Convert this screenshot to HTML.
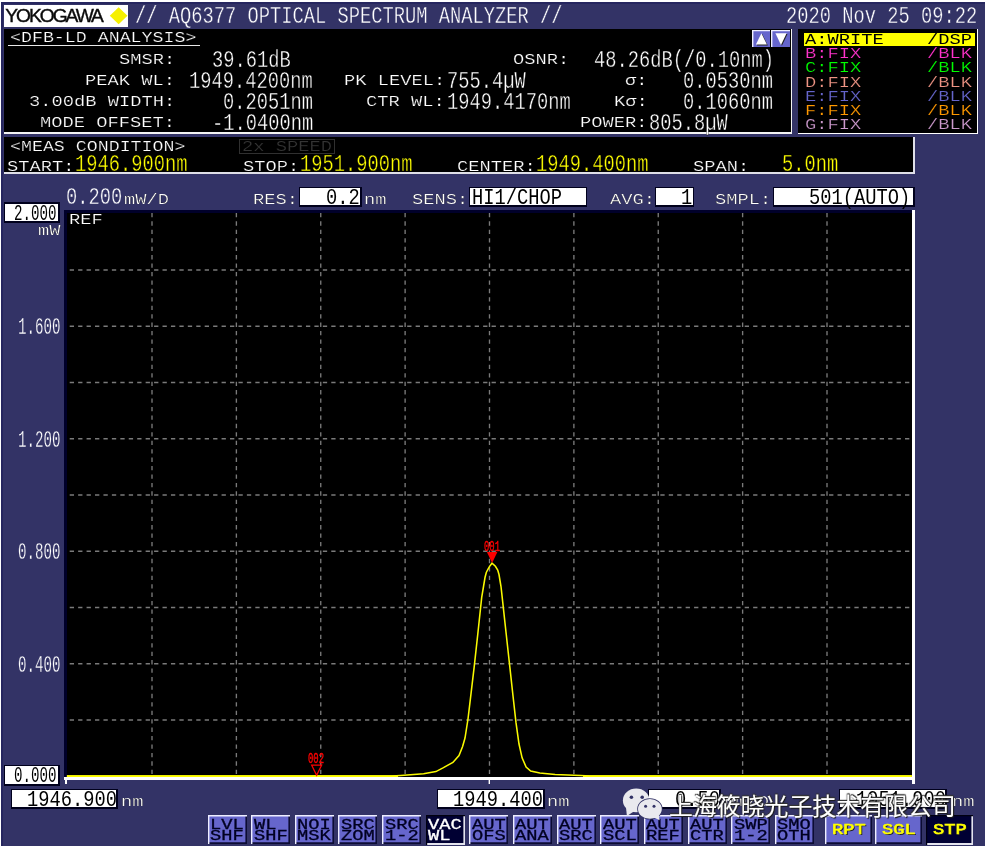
<!DOCTYPE html>
<html><head><meta charset="utf-8"><title>AQ6377 OPTICAL SPECTRUM ANALYZER</title>
<style>
html,body{margin:0;padding:0;background:#fff;}
body{width:988px;height:850px;position:relative;overflow:hidden;}
#scr{position:absolute;left:0;top:0;width:988px;height:850px;will-change:transform;}
.r{position:absolute;}
.t{position:absolute;white-space:pre;font-family:"Liberation Mono",monospace;transform-origin:0 0;}
.logo{position:absolute;font-family:"Liberation Sans",sans-serif;font-size:19.2px;line-height:22.3px;letter-spacing:-2.0px;color:#0a0a0a;-webkit-text-stroke:0.4px #0a0a0a;white-space:pre;}
.wm{position:absolute;font-family:"Liberation Sans","Noto Sans CJK SC",sans-serif;font-size:23.9px;line-height:32px;color:#fff;white-space:pre;font-weight:400;-webkit-text-stroke:0.1px #fff;text-shadow:1px 1px 1px #1a1a1a,-0.6px -0.6px 1px #333,0.8px -0.6px 1px #333;}
</style></head><body><div id="scr">
<div class="r" style="left:1.00px;top:1.80px;width:984.00px;height:844.20px;background:#333366;"></div>
<div class="r" style="left:1.00px;top:1.80px;width:984.00px;height:2.40px;background:#26265f;"></div>
<div class="r" style="left:1.00px;top:1.80px;width:1.60px;height:844.20px;background:#26265f;"></div>
<div class="r" style="left:3.70px;top:4.70px;width:124.80px;height:22.30px;background:#fff;"></div>
<div class="logo" style="left:5.2px;top:4.9px;">YOKOGAWA</div>
<svg class="r" style="left:108px;top:5px" width="21" height="21" viewBox="0 0 21 21"><polygon points="10.65,2.2 19.5,10.7 10.65,19.2 1.8,10.7" fill="#f6f000"/></svg>
<div class="t" style="left:134.70px;top:6.00px;font-size:23.1px;line-height:23.1px;transform:scaleX(0.8116);color:#fff;-webkit-text-stroke:0.38px #333366;">// AQ6377 OPTICAL SPECTRUM ANALYZER //</div>
<div class="t" style="left:786.00px;top:6.00px;font-size:23.1px;line-height:23.1px;transform:scaleX(0.8116);color:#fff;-webkit-text-stroke:0.38px #333366;">2020 Nov 25 09:22</div>
<div class="r" style="left:3.80px;top:28.70px;width:788.65px;height:105.20px;background:#f4f4f4;"></div>
<div class="r" style="left:3.80px;top:28.70px;width:787.30px;height:103.60px;background:#000;"></div>
<div class="t" style="left:9.80px;top:31.00px;font-size:14.4px;line-height:14.4px;transform:scaleX(1.2695);color:#fff;-webkit-text-stroke:0.22px #000;">&lt;DFB-LD ANALYSIS&gt;</div>
<div class="r" style="left:8.00px;top:44.50px;width:192.00px;height:1.20px;background:#e8e8e8;"></div>
<div class="t" style="left:118.95px;top:53.00px;font-size:14.4px;line-height:14.4px;transform:scaleX(1.3019);color:#fff;-webkit-text-stroke:0.22px #000;">SMSR:</div>
<div class="t" style="left:85.20px;top:74.00px;font-size:14.4px;line-height:14.4px;transform:scaleX(1.3019);color:#fff;-webkit-text-stroke:0.22px #000;">PEAK WL:</div>
<div class="t" style="left:28.95px;top:95.00px;font-size:14.4px;line-height:14.4px;transform:scaleX(1.3019);color:#fff;-webkit-text-stroke:0.22px #000;">3.00dB WIDTH:</div>
<div class="t" style="left:40.20px;top:116.00px;font-size:14.4px;line-height:14.4px;transform:scaleX(1.3019);color:#fff;-webkit-text-stroke:0.22px #000;">MODE OFFSET:</div>
<div class="t" style="left:211.70px;top:50.00px;font-size:23.1px;line-height:23.1px;transform:scaleX(0.8116);color:#fff;-webkit-text-stroke:0.38px #000;">39.61dB</div>
<div class="t" style="left:189.20px;top:71.00px;font-size:23.1px;line-height:23.1px;transform:scaleX(0.8116);color:#fff;-webkit-text-stroke:0.38px #000;">1949.4200nm</div>
<div class="t" style="left:222.95px;top:92.00px;font-size:23.1px;line-height:23.1px;transform:scaleX(0.8116);color:#fff;-webkit-text-stroke:0.38px #000;">0.2051nm</div>
<div class="t" style="left:211.70px;top:113.00px;font-size:23.1px;line-height:23.1px;transform:scaleX(0.8116);color:#fff;-webkit-text-stroke:0.38px #000;">-1.0400nm</div>
<div class="t" style="left:343.85px;top:74.00px;font-size:14.4px;line-height:14.4px;transform:scaleX(1.3019);color:#fff;-webkit-text-stroke:0.22px #000;">PK LEVEL:</div>
<div class="t" style="left:366.35px;top:95.00px;font-size:14.4px;line-height:14.4px;transform:scaleX(1.3019);color:#fff;-webkit-text-stroke:0.22px #000;">CTR WL:</div>
<div class="t" style="left:446.60px;top:71.00px;font-size:23.1px;line-height:23.1px;transform:scaleX(0.8116);color:#fff;-webkit-text-stroke:0.38px #000;">755.4µW</div>
<div class="t" style="left:446.60px;top:92.00px;font-size:23.1px;line-height:23.1px;transform:scaleX(0.8116);color:#fff;-webkit-text-stroke:0.38px #000;">1949.4170nm</div>
<div class="t" style="left:512.75px;top:53.00px;font-size:14.4px;line-height:14.4px;transform:scaleX(1.3019);color:#fff;-webkit-text-stroke:0.22px #000;">OSNR:</div>
<div class="t" style="left:624.90px;top:74.00px;font-size:14.4px;line-height:14.4px;transform:scaleX(1.3019);color:#fff;-webkit-text-stroke:0.22px #000;">σ:</div>
<div class="t" style="left:613.65px;top:95.00px;font-size:14.4px;line-height:14.4px;transform:scaleX(1.3019);color:#fff;-webkit-text-stroke:0.22px #000;">Kσ:</div>
<div class="t" style="left:579.90px;top:116.00px;font-size:14.4px;line-height:14.4px;transform:scaleX(1.3019);color:#fff;-webkit-text-stroke:0.22px #000;">POWER:</div>
<div class="t" style="left:593.80px;top:50.00px;font-size:23.1px;line-height:23.1px;transform:scaleX(0.8116);color:#fff;-webkit-text-stroke:0.38px #000;">48.26dB(/0.10nm)</div>
<div class="t" style="left:682.50px;top:71.00px;font-size:23.1px;line-height:23.1px;transform:scaleX(0.8116);color:#fff;-webkit-text-stroke:0.38px #000;">0.0530nm</div>
<div class="t" style="left:682.50px;top:92.00px;font-size:23.1px;line-height:23.1px;transform:scaleX(0.8116);color:#fff;-webkit-text-stroke:0.38px #000;">0.1060nm</div>
<div class="t" style="left:649.00px;top:113.00px;font-size:23.1px;line-height:23.1px;transform:scaleX(0.8116);color:#fff;-webkit-text-stroke:0.38px #000;">805.8µW</div>
<div class="r" style="left:751.70px;top:30.20px;width:18.30px;height:16.80px;background:#6666cc;box-shadow:inset 1.4px 1.3px 0 #f0f0ff;"></div>
<svg class="r" style="left:0;top:0" width="988" height="60"><polygon points="761.4,33.2 766.9,44.6 755.9,44.6" fill="#222" transform="translate(0.9,0.9)"/><polygon points="761.4,33.2 766.9,44.6 755.9,44.6" fill="#fff"/></svg>
<div class="r" style="left:771.20px;top:30.20px;width:18.60px;height:16.80px;background:#6666cc;box-shadow:inset 1.4px 1.3px 0 #f0f0ff;"></div>
<svg class="r" style="left:0;top:0" width="988" height="60"><polygon points="781.0,44.9 786.6,33.2 775.4,33.2" fill="#222" transform="translate(0.9,0.9)"/><polygon points="781.0,44.9 786.6,33.2 775.4,33.2" fill="#fff"/></svg>
<div class="r" style="left:797.90px;top:28.70px;width:180.40px;height:105.50px;background:#fff;"></div>
<div class="r" style="left:797.90px;top:28.70px;width:179.00px;height:104.10px;background:#000;"></div>
<div class="r" style="left:803.50px;top:33.00px;width:171.30px;height:12.60px;background:#ffff00;"></div>
<div class="t" style="left:804.60px;top:33.00px;font-size:14.4px;line-height:14.4px;transform:scaleX(1.3019);color:#000;">A:WRITE</div>
<div class="t" style="left:927.00px;top:33.00px;font-size:14.4px;line-height:14.4px;transform:scaleX(1.3019);color:#000;">/DSP</div>
<div class="t" style="left:804.60px;top:47.00px;font-size:14.4px;line-height:14.4px;transform:scaleX(1.3019);color:#ff33cc;-webkit-text-stroke:0.22px #000;">B:FIX</div>
<div class="t" style="left:927.00px;top:47.00px;font-size:14.4px;line-height:14.4px;transform:scaleX(1.3019);color:#ff33cc;-webkit-text-stroke:0.22px #000;">/BLK</div>
<div class="t" style="left:804.60px;top:61.00px;font-size:14.4px;line-height:14.4px;transform:scaleX(1.3019);color:#00ff00;-webkit-text-stroke:0.22px #000;">C:FIX</div>
<div class="t" style="left:927.00px;top:61.00px;font-size:14.4px;line-height:14.4px;transform:scaleX(1.3019);color:#00ff00;-webkit-text-stroke:0.22px #000;">/BLK</div>
<div class="t" style="left:804.60px;top:76.00px;font-size:14.4px;line-height:14.4px;transform:scaleX(1.3019);color:#ee9484;-webkit-text-stroke:0.22px #000;">D:FIX</div>
<div class="t" style="left:927.00px;top:76.00px;font-size:14.4px;line-height:14.4px;transform:scaleX(1.3019);color:#ee9484;-webkit-text-stroke:0.22px #000;">/BLK</div>
<div class="t" style="left:804.60px;top:90.00px;font-size:14.4px;line-height:14.4px;transform:scaleX(1.3019);color:#6666cc;-webkit-text-stroke:0.22px #000;">E:FIX</div>
<div class="t" style="left:927.00px;top:90.00px;font-size:14.4px;line-height:14.4px;transform:scaleX(1.3019);color:#6666cc;-webkit-text-stroke:0.22px #000;">/BLK</div>
<div class="t" style="left:804.60px;top:104.00px;font-size:14.4px;line-height:14.4px;transform:scaleX(1.3019);color:#ff9900;-webkit-text-stroke:0.22px #000;">F:FIX</div>
<div class="t" style="left:927.00px;top:104.00px;font-size:14.4px;line-height:14.4px;transform:scaleX(1.3019);color:#ff9900;-webkit-text-stroke:0.22px #000;">/BLK</div>
<div class="t" style="left:804.60px;top:118.00px;font-size:14.4px;line-height:14.4px;transform:scaleX(1.3019);color:#cc99cc;-webkit-text-stroke:0.22px #000;">G:FIX</div>
<div class="t" style="left:927.00px;top:118.00px;font-size:14.4px;line-height:14.4px;transform:scaleX(1.3019);color:#cc99cc;-webkit-text-stroke:0.22px #000;">/BLK</div>
<div class="r" style="left:3.80px;top:137.00px;width:910.80px;height:36.90px;background:#e0e0e8;"></div>
<div class="r" style="left:3.80px;top:137.00px;width:909.40px;height:35.30px;background:#000;"></div>
<div class="t" style="left:9.80px;top:140.00px;font-size:14.4px;line-height:14.4px;transform:scaleX(1.2695);color:#fff;-webkit-text-stroke:0.22px #000;">&lt;MEAS CONDITION&gt;</div>
<div class="r" style="left:238.60px;top:139.00px;width:96.60px;height:15.00px;background:#000;border:1px solid #303030;box-sizing:border-box;"></div>
<div class="t" style="left:242.30px;top:140.00px;font-size:14.4px;line-height:14.4px;transform:scaleX(1.3019);color:#343434;-webkit-text-stroke:0.22px #000;">2x SPEED</div>
<div class="t" style="left:6.50px;top:160.00px;font-size:14.4px;line-height:14.4px;transform:scaleX(1.3019);color:#fff;-webkit-text-stroke:0.22px #000;">START:</div>
<div class="t" style="left:74.50px;top:154.00px;font-size:23.1px;line-height:23.1px;transform:scaleX(0.8116);color:#ffff00;-webkit-text-stroke:0.38px #000;">1946.900nm</div>
<div class="t" style="left:242.75px;top:160.00px;font-size:14.4px;line-height:14.4px;transform:scaleX(1.3019);color:#fff;-webkit-text-stroke:0.22px #000;">STOP:</div>
<div class="t" style="left:299.50px;top:154.00px;font-size:23.1px;line-height:23.1px;transform:scaleX(0.8116);color:#ffff00;-webkit-text-stroke:0.38px #000;">1951.900nm</div>
<div class="t" style="left:456.50px;top:160.00px;font-size:14.4px;line-height:14.4px;transform:scaleX(1.3019);color:#fff;-webkit-text-stroke:0.22px #000;">CENTER:</div>
<div class="t" style="left:535.70px;top:154.00px;font-size:23.1px;line-height:23.1px;transform:scaleX(0.8116);color:#ffff00;-webkit-text-stroke:0.38px #000;">1949.400nm</div>
<div class="t" style="left:692.75px;top:160.00px;font-size:14.4px;line-height:14.4px;transform:scaleX(1.3019);color:#fff;-webkit-text-stroke:0.22px #000;">SPAN:</div>
<div class="t" style="left:782.20px;top:154.00px;font-size:23.1px;line-height:23.1px;transform:scaleX(0.8116);color:#ffff00;-webkit-text-stroke:0.38px #000;">5.0nm</div>
<div class="t" style="left:66.00px;top:187.00px;font-size:23.1px;line-height:23.1px;transform:scaleX(0.8116);color:#fff;-webkit-text-stroke:0.38px #333366;">0.200</div>
<div class="t" style="left:123.80px;top:193.00px;font-size:14.4px;line-height:14.4px;transform:scaleX(1.3019);color:#fff;-webkit-text-stroke:0.22px #000;">mW/D</div>
<div class="t" style="left:252.60px;top:193.00px;font-size:14.4px;line-height:14.4px;transform:scaleX(1.3019);color:#fff;-webkit-text-stroke:0.22px #000;">RES:</div>
<div class="r" style="left:298.90px;top:186.50px;width:62.90px;height:20.80px;background:#00001c;"></div>
<div class="r" style="left:300.10px;top:187.70px;width:59.90px;height:17.80px;background:#fff;"></div>
<div class="t" style="left:325.65px;top:187.00px;font-size:22.8px;line-height:22.8px;transform:scaleX(0.8222);color:#000;">0.2</div>
<div class="t" style="left:364.30px;top:193.00px;font-size:14.4px;line-height:14.4px;transform:scaleX(1.3019);color:#fff;-webkit-text-stroke:0.22px #000;">nm</div>
<div class="t" style="left:411.50px;top:193.00px;font-size:14.4px;line-height:14.4px;transform:scaleX(1.3019);color:#fff;-webkit-text-stroke:0.22px #000;">SENS:</div>
<div class="r" style="left:469.20px;top:186.50px;width:118.30px;height:20.80px;background:#00001c;"></div>
<div class="r" style="left:470.40px;top:187.70px;width:115.30px;height:17.80px;background:#fff;"></div>
<div class="t" style="left:471.90px;top:187.00px;font-size:22.8px;line-height:22.8px;transform:scaleX(0.8222);color:#000;">HI1/CHOP</div>
<div class="t" style="left:609.70px;top:193.00px;font-size:14.4px;line-height:14.4px;transform:scaleX(1.3019);color:#fff;-webkit-text-stroke:0.22px #000;">AVG:</div>
<div class="r" style="left:655.00px;top:186.50px;width:39.40px;height:20.80px;background:#00001c;"></div>
<div class="r" style="left:656.20px;top:187.70px;width:36.40px;height:17.80px;background:#fff;"></div>
<div class="t" style="left:680.75px;top:187.00px;font-size:22.8px;line-height:22.8px;transform:scaleX(0.8222);color:#000;">1</div>
<div class="t" style="left:715.25px;top:193.00px;font-size:14.4px;line-height:14.4px;transform:scaleX(1.3019);color:#fff;-webkit-text-stroke:0.22px #000;">SMPL:</div>
<div class="r" style="left:772.50px;top:186.50px;width:142.00px;height:20.80px;background:#00001c;"></div>
<div class="r" style="left:773.70px;top:187.70px;width:139.00px;height:17.80px;background:#fff;"></div>
<div class="t" style="left:809.05px;top:187.00px;font-size:22.8px;line-height:22.8px;transform:scaleX(0.8222);color:#000;">501(AUTO)</div>
<div class="r" style="left:64.20px;top:210.00px;width:850.60px;height:570.00px;background:#fff;"></div>
<div class="r" style="left:64.20px;top:210.00px;width:847.60px;height:567.00px;background:#00002a;"></div>
<div class="r" style="left:66.90px;top:212.80px;width:844.90px;height:564.20px;background:#000;"></div>
<svg class="r" style="left:0;top:0" width="988" height="850" viewBox="0 0 988 850"><g stroke="#7a7a7a" stroke-width="1.35" fill="none" stroke-dasharray="4.3 4.1375"><line x1="69.7" y1="270.00" x2="911.8" y2="270.00"/><line x1="69.7" y1="326.25" x2="911.8" y2="326.25"/><line x1="69.7" y1="382.50" x2="911.8" y2="382.50"/><line x1="69.7" y1="438.75" x2="911.8" y2="438.75"/><line x1="69.7" y1="495.00" x2="911.8" y2="495.00"/><line x1="69.7" y1="551.25" x2="911.8" y2="551.25"/><line x1="69.7" y1="607.50" x2="911.8" y2="607.50"/><line x1="69.7" y1="663.75" x2="911.8" y2="663.75"/><line x1="69.7" y1="720.00" x2="911.8" y2="720.00"/><line x1="152.00" y1="212.9" x2="152.00" y2="776.25"/><line x1="236.38" y1="212.9" x2="236.38" y2="776.25"/><line x1="320.75" y1="212.9" x2="320.75" y2="776.25"/><line x1="405.12" y1="212.9" x2="405.12" y2="776.25"/><line x1="489.50" y1="212.9" x2="489.50" y2="776.25"/><line x1="573.88" y1="212.9" x2="573.88" y2="776.25"/><line x1="658.25" y1="212.9" x2="658.25" y2="776.25"/><line x1="742.62" y1="212.9" x2="742.62" y2="776.25"/><line x1="827.00" y1="212.9" x2="827.00" y2="776.25"/></g><polyline fill="none" stroke="#fafa00" stroke-width="1.55" stroke-linejoin="miter" points="66.9,776.0 392.0,776.0 400.7,775.5 423.6,773.7 435.9,771.6 443.0,767.9 452.9,762.4 459.0,755.6 462.6,746.5 465.0,738.0 468.0,719.0 470.1,701.3 474.1,667.6 477.8,634.0 481.7,597.3 483.6,586.0 485.0,577.5 486.3,572.5 487.8,569.5 489.6,566.4 492.0,563.2 495.4,566.3 497.7,570.0 499.0,574.5 499.9,580.0 501.0,586.5 502.2,597.3 506.2,634.0 509.9,667.6 512.9,695.0 516.0,722.7 519.0,744.0 522.1,757.8 526.1,767.0 530.7,771.0 539.8,773.1 555.1,774.6 580.4,775.6 590.0,776.0 911.8,776.0"/><path d="M66.9 776.1H398M583 776.1H911.8" fill="none" stroke="#ffff00" stroke-width="1.8"/><polygon points="486.9,552.1 497.4,552.1 492.1,563" fill="#ff0000"/><polygon points="311.7,765.2 321.6,765.2 316.6,775.2" fill="none" stroke="#ff0000" stroke-width="1.3"/><g stroke="#fff" stroke-width="1.4"><line x1="489.3" y1="779" x2="489.3" y2="784"/></g></svg>
<div class="r" style="left:64.60px;top:779.50px;width:2.40px;height:4.50px;background:#fff;"></div>
<div class="r" style="left:912.40px;top:779.50px;width:2.40px;height:4.50px;background:#fff;"></div>
<div class="t" style="left:483.80px;top:540.00px;font-size:15.2px;line-height:15.2px;transform:scaleX(0.5865);color:#ff0000;-webkit-text-stroke:0.45px #ff0000;">001</div>
<div class="t" style="left:308.40px;top:752.00px;font-size:15.2px;line-height:15.2px;transform:scaleX(0.5865);color:#ff0000;-webkit-text-stroke:0.45px #ff0000;">002</div>
<div class="t" style="left:68.60px;top:213.00px;font-size:14.4px;line-height:14.4px;transform:scaleX(1.3019);color:#fff;-webkit-text-stroke:0.22px #000;">REF</div>
<div class="r" style="left:4.00px;top:202.30px;width:56.30px;height:20.60px;background:#00001c;"></div>
<div class="r" style="left:5.20px;top:203.50px;width:53.30px;height:17.60px;background:#fff;"></div>
<div class="t" style="left:13.90px;top:203.00px;font-size:22.8px;line-height:22.8px;transform:scaleX(0.6212);color:#000;">2.000</div>
<div class="t" style="left:37.80px;top:224.00px;font-size:14.4px;line-height:14.4px;transform:scaleX(1.3019);color:#fff;-webkit-text-stroke:0.22px #000;">mW</div>
<div class="t" style="left:18.40px;top:317.00px;font-size:23.1px;line-height:23.1px;transform:scaleX(0.6132);color:#fff;-webkit-text-stroke:0.3px #333366;">1.600</div>
<div class="t" style="left:18.40px;top:430.00px;font-size:23.1px;line-height:23.1px;transform:scaleX(0.6132);color:#fff;-webkit-text-stroke:0.3px #333366;">1.200</div>
<div class="t" style="left:18.40px;top:542.00px;font-size:23.1px;line-height:23.1px;transform:scaleX(0.6132);color:#fff;-webkit-text-stroke:0.3px #333366;">0.800</div>
<div class="t" style="left:18.40px;top:655.00px;font-size:23.1px;line-height:23.1px;transform:scaleX(0.6132);color:#fff;-webkit-text-stroke:0.3px #333366;">0.400</div>
<div class="r" style="left:4.00px;top:764.90px;width:56.20px;height:20.70px;background:#00001c;"></div>
<div class="r" style="left:5.20px;top:766.10px;width:53.20px;height:17.70px;background:#fff;"></div>
<div class="t" style="left:13.90px;top:765.00px;font-size:22.8px;line-height:22.8px;transform:scaleX(0.6212);color:#000;">0.000</div>
<div class="r" style="left:11.00px;top:788.80px;width:106.90px;height:20.10px;background:#00001c;"></div>
<div class="r" style="left:12.20px;top:790.00px;width:103.90px;height:17.10px;background:#fff;"></div>
<div class="t" style="left:26.90px;top:789.00px;font-size:22.8px;line-height:22.8px;transform:scaleX(0.8222);color:#000;">1946.900</div>
<div class="t" style="left:121.00px;top:795.00px;font-size:14.4px;line-height:14.4px;transform:scaleX(1.3019);color:#fff;-webkit-text-stroke:0.22px #000;">nm</div>
<div class="r" style="left:436.90px;top:788.80px;width:108.00px;height:20.10px;background:#00001c;"></div>
<div class="r" style="left:438.10px;top:790.00px;width:105.00px;height:17.10px;background:#fff;"></div>
<div class="t" style="left:452.90px;top:789.00px;font-size:22.8px;line-height:22.8px;transform:scaleX(0.8222);color:#000;">1949.400</div>
<div class="t" style="left:546.90px;top:795.00px;font-size:14.4px;line-height:14.4px;transform:scaleX(1.3019);color:#fff;-webkit-text-stroke:0.22px #000;">nm</div>
<div class="r" style="left:648.00px;top:788.80px;width:73.30px;height:20.10px;background:#00001c;"></div>
<div class="r" style="left:649.20px;top:790.00px;width:70.30px;height:17.10px;background:#fff;"></div>
<div class="t" style="left:674.60px;top:789.00px;font-size:22.8px;line-height:22.8px;transform:scaleX(0.8222);color:#000;">0.50</div>
<div class="t" style="left:724.00px;top:795.00px;font-size:14.4px;line-height:14.4px;transform:scaleX(1.3019);color:#fff;-webkit-text-stroke:0.22px #000;">nm/D</div>
<div class="r" style="left:839.20px;top:788.80px;width:107.90px;height:20.10px;background:#00001c;"></div>
<div class="r" style="left:840.40px;top:790.00px;width:104.90px;height:17.10px;background:#fff;"></div>
<div class="t" style="left:855.60px;top:789.00px;font-size:22.8px;line-height:22.8px;transform:scaleX(0.8222);color:#000;">1951.900</div>
<div class="t" style="left:952.20px;top:795.00px;font-size:14.4px;line-height:14.4px;transform:scaleX(1.3019);color:#fff;-webkit-text-stroke:0.22px #000;">nm</div>
<div class="r" style="left:207.60px;top:814.90px;width:39.00px;height:29.40px;background:#6666cc;box-shadow:inset 1.4px 1.4px 0 #eeeeff, inset -1.6px -1.7px 0 #0c0c33;"></div>
<div class="t" style="left:210.00px;top:818.00px;font-size:14.4px;line-height:14.4px;transform:scaleX(1.3019);color:#000022;-webkit-text-stroke:0.3px #000022;">LVL</div>
<div class="t" style="left:210.00px;top:829.00px;font-size:14.4px;line-height:14.4px;transform:scaleX(1.3019);color:#000022;-webkit-text-stroke:0.3px #000022;">SHF</div>
<div class="r" style="left:251.23px;top:814.90px;width:39.00px;height:29.40px;background:#6666cc;box-shadow:inset 1.4px 1.4px 0 #eeeeff, inset -1.6px -1.7px 0 #0c0c33;"></div>
<div class="t" style="left:253.63px;top:818.00px;font-size:14.4px;line-height:14.4px;transform:scaleX(1.3019);color:#000022;-webkit-text-stroke:0.3px #000022;">WL</div>
<div class="t" style="left:253.63px;top:829.00px;font-size:14.4px;line-height:14.4px;transform:scaleX(1.3019);color:#000022;-webkit-text-stroke:0.3px #000022;">SHF</div>
<div class="r" style="left:294.86px;top:814.90px;width:39.00px;height:29.40px;background:#6666cc;box-shadow:inset 1.4px 1.4px 0 #eeeeff, inset -1.6px -1.7px 0 #0c0c33;"></div>
<div class="t" style="left:297.26px;top:818.00px;font-size:14.4px;line-height:14.4px;transform:scaleX(1.3019);color:#000022;-webkit-text-stroke:0.3px #000022;">NOI</div>
<div class="t" style="left:297.26px;top:829.00px;font-size:14.4px;line-height:14.4px;transform:scaleX(1.3019);color:#000022;-webkit-text-stroke:0.3px #000022;">MSK</div>
<div class="r" style="left:338.49px;top:814.90px;width:39.00px;height:29.40px;background:#6666cc;box-shadow:inset 1.4px 1.4px 0 #eeeeff, inset -1.6px -1.7px 0 #0c0c33;"></div>
<div class="t" style="left:340.89px;top:818.00px;font-size:14.4px;line-height:14.4px;transform:scaleX(1.3019);color:#000022;-webkit-text-stroke:0.3px #000022;">SRC</div>
<div class="t" style="left:340.89px;top:829.00px;font-size:14.4px;line-height:14.4px;transform:scaleX(1.3019);color:#000022;-webkit-text-stroke:0.3px #000022;">ZOM</div>
<div class="r" style="left:382.12px;top:814.90px;width:39.00px;height:29.40px;background:#6666cc;box-shadow:inset 1.4px 1.4px 0 #eeeeff, inset -1.6px -1.7px 0 #0c0c33;"></div>
<div class="t" style="left:384.52px;top:818.00px;font-size:14.4px;line-height:14.4px;transform:scaleX(1.3019);color:#000022;-webkit-text-stroke:0.3px #000022;">SRC</div>
<div class="t" style="left:384.52px;top:829.00px;font-size:14.4px;line-height:14.4px;transform:scaleX(1.3019);color:#000022;-webkit-text-stroke:0.3px #000022;">1-2</div>
<div class="r" style="left:425.75px;top:814.90px;width:39.00px;height:29.90px;background:#000033;box-shadow:inset 1.2px 1.2px 0 #000011, inset -1.6px -1.9px 0 #e4e4ee;"></div>
<div class="t" style="left:428.15px;top:818.00px;font-size:14.4px;line-height:14.4px;transform:scaleX(1.3019);color:#fff;-webkit-text-stroke:0.3px #fff;">VAC</div>
<div class="t" style="left:428.15px;top:829.00px;font-size:14.4px;line-height:14.4px;transform:scaleX(1.3019);color:#fff;-webkit-text-stroke:0.3px #fff;">WL</div>
<div class="r" style="left:469.38px;top:814.90px;width:39.00px;height:29.40px;background:#6666cc;box-shadow:inset 1.4px 1.4px 0 #eeeeff, inset -1.6px -1.7px 0 #0c0c33;"></div>
<div class="t" style="left:471.78px;top:818.00px;font-size:14.4px;line-height:14.4px;transform:scaleX(1.3019);color:#000022;-webkit-text-stroke:0.3px #000022;">AUT</div>
<div class="t" style="left:471.78px;top:829.00px;font-size:14.4px;line-height:14.4px;transform:scaleX(1.3019);color:#000022;-webkit-text-stroke:0.3px #000022;">OFS</div>
<div class="r" style="left:513.01px;top:814.90px;width:39.00px;height:29.40px;background:#6666cc;box-shadow:inset 1.4px 1.4px 0 #eeeeff, inset -1.6px -1.7px 0 #0c0c33;"></div>
<div class="t" style="left:515.41px;top:818.00px;font-size:14.4px;line-height:14.4px;transform:scaleX(1.3019);color:#000022;-webkit-text-stroke:0.3px #000022;">AUT</div>
<div class="t" style="left:515.41px;top:829.00px;font-size:14.4px;line-height:14.4px;transform:scaleX(1.3019);color:#000022;-webkit-text-stroke:0.3px #000022;">ANA</div>
<div class="r" style="left:556.64px;top:814.90px;width:39.00px;height:29.40px;background:#6666cc;box-shadow:inset 1.4px 1.4px 0 #eeeeff, inset -1.6px -1.7px 0 #0c0c33;"></div>
<div class="t" style="left:559.04px;top:818.00px;font-size:14.4px;line-height:14.4px;transform:scaleX(1.3019);color:#000022;-webkit-text-stroke:0.3px #000022;">AUT</div>
<div class="t" style="left:559.04px;top:829.00px;font-size:14.4px;line-height:14.4px;transform:scaleX(1.3019);color:#000022;-webkit-text-stroke:0.3px #000022;">SRC</div>
<div class="r" style="left:600.27px;top:814.90px;width:39.00px;height:29.40px;background:#6666cc;box-shadow:inset 1.4px 1.4px 0 #eeeeff, inset -1.6px -1.7px 0 #0c0c33;"></div>
<div class="t" style="left:602.67px;top:818.00px;font-size:14.4px;line-height:14.4px;transform:scaleX(1.3019);color:#000022;-webkit-text-stroke:0.3px #000022;">AUT</div>
<div class="t" style="left:602.67px;top:829.00px;font-size:14.4px;line-height:14.4px;transform:scaleX(1.3019);color:#000022;-webkit-text-stroke:0.3px #000022;">SCL</div>
<div class="r" style="left:643.90px;top:814.90px;width:39.00px;height:29.40px;background:#6666cc;box-shadow:inset 1.4px 1.4px 0 #eeeeff, inset -1.6px -1.7px 0 #0c0c33;"></div>
<div class="t" style="left:646.30px;top:818.00px;font-size:14.4px;line-height:14.4px;transform:scaleX(1.3019);color:#000022;-webkit-text-stroke:0.3px #000022;">AUT</div>
<div class="t" style="left:646.30px;top:829.00px;font-size:14.4px;line-height:14.4px;transform:scaleX(1.3019);color:#000022;-webkit-text-stroke:0.3px #000022;">REF</div>
<div class="r" style="left:687.53px;top:814.90px;width:39.00px;height:29.40px;background:#6666cc;box-shadow:inset 1.4px 1.4px 0 #eeeeff, inset -1.6px -1.7px 0 #0c0c33;"></div>
<div class="t" style="left:689.93px;top:818.00px;font-size:14.4px;line-height:14.4px;transform:scaleX(1.3019);color:#000022;-webkit-text-stroke:0.3px #000022;">AUT</div>
<div class="t" style="left:689.93px;top:829.00px;font-size:14.4px;line-height:14.4px;transform:scaleX(1.3019);color:#000022;-webkit-text-stroke:0.3px #000022;">CTR</div>
<div class="r" style="left:731.16px;top:814.90px;width:39.00px;height:29.40px;background:#6666cc;box-shadow:inset 1.4px 1.4px 0 #eeeeff, inset -1.6px -1.7px 0 #0c0c33;"></div>
<div class="t" style="left:733.56px;top:818.00px;font-size:14.4px;line-height:14.4px;transform:scaleX(1.3019);color:#000022;-webkit-text-stroke:0.3px #000022;">SWP</div>
<div class="t" style="left:733.56px;top:829.00px;font-size:14.4px;line-height:14.4px;transform:scaleX(1.3019);color:#000022;-webkit-text-stroke:0.3px #000022;">1-2</div>
<div class="r" style="left:774.79px;top:814.90px;width:39.00px;height:29.40px;background:#6666cc;box-shadow:inset 1.4px 1.4px 0 #eeeeff, inset -1.6px -1.7px 0 #0c0c33;"></div>
<div class="t" style="left:777.19px;top:818.00px;font-size:14.4px;line-height:14.4px;transform:scaleX(1.3019);color:#000022;-webkit-text-stroke:0.3px #000022;">SMO</div>
<div class="t" style="left:777.19px;top:829.00px;font-size:14.4px;line-height:14.4px;transform:scaleX(1.3019);color:#000022;-webkit-text-stroke:0.3px #000022;">OTH</div>
<div class="r" style="left:825.00px;top:814.90px;width:46.50px;height:29.40px;background:#6666cc;box-shadow:inset 1.4px 1.4px 0 #eeeeff, inset -1.6px -1.7px 0 #0c0c33;"></div>
<div class="t" style="left:831.58px;top:823.00px;font-size:14.4px;line-height:14.4px;transform:scaleX(1.3019);color:#ffff00;text-shadow:0.9px 0.9px 0 #1a1a22;-webkit-text-stroke:0.55px #ffff00;">RPT</div>
<div class="r" style="left:875.20px;top:814.90px;width:46.50px;height:29.40px;background:#6666cc;box-shadow:inset 1.4px 1.4px 0 #eeeeff, inset -1.6px -1.7px 0 #0c0c33;"></div>
<div class="t" style="left:881.78px;top:823.00px;font-size:14.4px;line-height:14.4px;transform:scaleX(1.3019);color:#ffff00;text-shadow:0.9px 0.9px 0 #1a1a22;-webkit-text-stroke:0.55px #ffff00;">SGL</div>
<div class="r" style="left:926.00px;top:814.90px;width:46.50px;height:29.90px;background:#000033;box-shadow:inset 1.2px 1.2px 0 #000011, inset -1.6px -1.9px 0 #e4e4ee;"></div>
<div class="t" style="left:932.58px;top:823.00px;font-size:14.4px;line-height:14.4px;transform:scaleX(1.3019);color:#ffff00;text-shadow:0.9px 0.9px 0 #1a1a22;-webkit-text-stroke:0.55px #ffff00;">STP</div>
<svg class="r" style="left:0;top:0" width="988" height="850" viewBox="0 0 988 850">
<g fill="#e9e9ee">
<ellipse cx="636.2" cy="800.4" rx="13.3" ry="11.9"/>
<polygon points="626.0,807.5 626.9,815.9 634.5,811.0"/>
</g>
<g fill="#e9e9ee" stroke="#333366" stroke-width="1.6" paint-order="stroke">
<ellipse cx="649.9" cy="808.9" rx="11.9" ry="9.9"/>
</g>
<polygon points="654.0,817.6 659.6,820.2 658.6,813.5" fill="#e9e9ee"/>
<g fill="#333366"><circle cx="631.4" cy="797.2" r="1.8"/><circle cx="642.2" cy="797.2" r="1.8"/><circle cx="645.6" cy="806.3" r="1.5"/><circle cx="654.0" cy="806.3" r="1.5"/></g>
</svg>
<div class="wm" style="left:669.0px;top:790.6px;">上海筱晓光子技术有限公司</div>
</div></body></html>
